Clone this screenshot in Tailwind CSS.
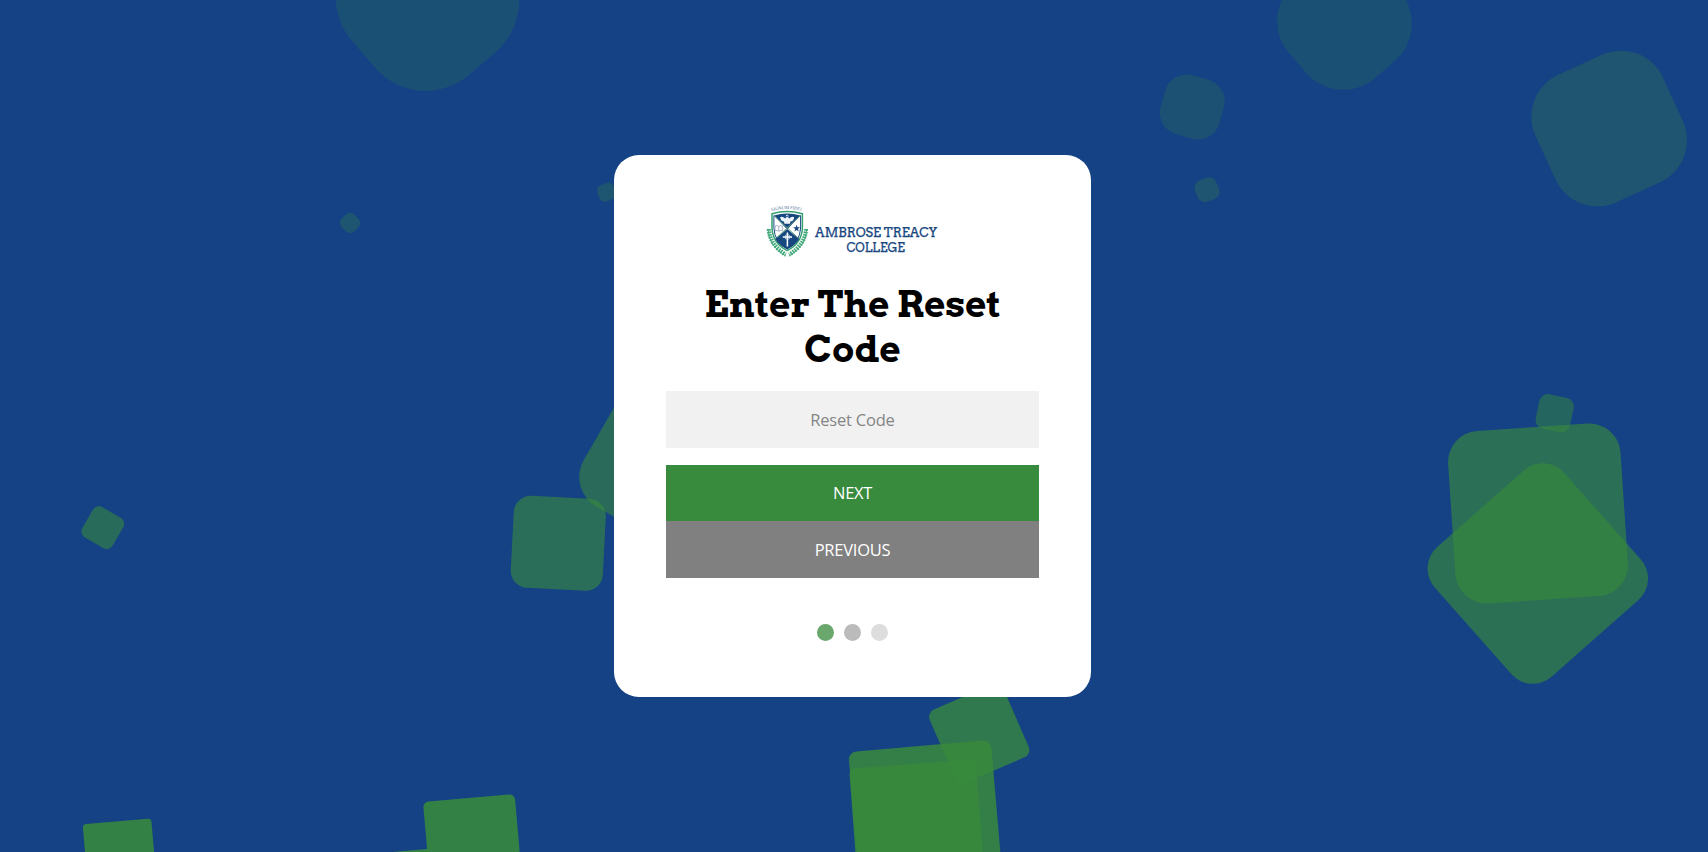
<!DOCTYPE html>
<html lang="en">
<head>
<meta charset="utf-8">
<title>Enter The Reset Code</title>
<script src="https://cdn.jsdelivr.net/npm/@tailwindcss/browser@4"></script>
</head>
<body class="relative flex h-screen items-start justify-center overflow-hidden bg-[#154284] pt-[154.7px] font-['Open_Sans','Noto_Sans',sans-serif]">
  <!-- Floating squares -->
  <svg class="absolute inset-0 h-full w-full" viewBox="0 0 1708 852" fill="#388a3c" aria-hidden="true">
    <rect x="-84.5" y="-84.5" width="169" height="169" rx="67" opacity=".2" transform="translate(427.5 -.9) rotate(49)"/>
    <rect x="-62" y="-62" width="124" height="124" rx="49" opacity=".2" transform="translate(1344.5 22.4) rotate(49)"/>
    <rect x="-30.5" y="-30.5" width="61" height="61" rx="22" opacity=".22" transform="translate(1192.3 107) rotate(16)"/>
    <rect x="-11.4" y="-11.4" width="22.8" height="22.8" rx="7.8" opacity=".28" transform="translate(1207 189.7) rotate(-22)"/>
    <rect x="-70" y="-70" width="140" height="140" rx="46" opacity=".28" transform="translate(1609.2 128.5) rotate(-24.5)"/>
    <rect x="-8.9" y="-8.9" width="17.8" height="17.8" rx="6.2" opacity=".27" transform="translate(350 223) rotate(45)"/>
    <rect x="-8.75" y="-8.75" width="17.5" height="17.5" rx="6" opacity=".27" transform="translate(606.5 192.3) rotate(-20)"/>
    <rect x="-17.5" y="-17.5" width="35" height="35" rx="8.7" opacity=".49" transform="translate(1554.7 413.2) rotate(12)"/>
    <rect x="-86.4" y="-86.4" width="172.8" height="172.8" rx="31" opacity=".62" transform="translate(1538 513.5) rotate(-3.8)"/>
    <rect x="-86.5" y="-86.5" width="173" height="173" rx="28.7" opacity=".64" transform="translate(1537.8 573.5) rotate(48.5)"/>
    <rect x="-75" y="-75" width="150" height="150" rx="34" opacity=".57" transform="translate(669.2 462) rotate(30)"/>
    <rect x="-46.1" y="-46.1" width="92.2" height="92.2" rx="17" opacity=".61" transform="translate(558.3 543.3) rotate(2.9)"/>
    <rect x="-17.5" y="-17.5" width="35" height="35" rx="7" opacity=".58" transform="translate(102.8 527.7) rotate(30)"/>
    <rect x="-34.4" y="-34.4" width="68.8" height="68.8" rx="3.5" opacity=".88" transform="translate(119.9 855.7) rotate(-5)"/>
    <rect x="-46" y="-46" width="92" height="92" rx="5.5" opacity=".88" transform="translate(472.8 843.8) rotate(-5)"/>
    <rect x="-30" y="-30" width="60" height="60" rx="2" opacity=".88" transform="translate(401.6 881.3) rotate(-5)"/>
    <rect x="-40" y="-40" width="80" height="80" rx="8" opacity=".76" transform="translate(979.2 733.4) rotate(-23.5)"/>
    <rect x="-71.5" y="-71.5" width="143" height="143" rx="8" opacity=".85" transform="translate(925.6 817.2) rotate(-4.9)"/>
    <rect x="-63.5" y="-63.5" width="127" height="127" rx="6" opacity=".88" transform="translate(917.2 827.3) rotate(-4.3)"/>
  </svg>

  <main class="relative -left-[1.5px] flex h-[542px] w-[476.4px] shrink-0 flex-col items-center rounded-[25px] bg-white px-[51.8px] pt-[48.3px]">
    <svg class="block h-[58px] w-[200px] shrink-0 overflow-visible" viewBox="752.4 203 200 58" role="img" aria-label="Ambrose Treacy College">
      <path id="motto" d="M772 211.4Q787.5 206.6 803 211.4" fill="none"/>
      <text font-family="'Liberation Serif',serif" font-size="4.6" fill="#5d7396"><textPath href="#motto" textLength="30">SIGNUM FIDEI</textPath></text>
      <path d="M772.4 213.8Q787.5 209 802.8 213.8V228Q802 243.5 787.6 250.6Q773.2 243.5 772.4 228Z" fill="#fff" stroke="#36a071" stroke-width="1.5"/>
      <path d="M774.4 215.6Q787.5 211.6 800.8 215.6L787.6 229.4Z" fill="#16487f"/>
      <path d="M787.6 229L775.6 239Q779.5 245.7 787.6 249.2Q795.7 245.7 799.6 239Z" fill="#16487f"/>
      <path d="M774.3 215.5L799.6 239M801 215.5L775.6 239" stroke="#5c977f" stroke-width="1"/>
      <path d="M774.3 215.5V228Q775 242.5 787.6 249Q800.2 242.5 801 228V215.5" fill="none" stroke="#16487f" stroke-width="1"/>
      <path d="M780.5 217.3Q783 216 785.5 218.4L787.6 216.6L789.7 218.4Q792.2 216 794.7 217.3Q794 221.5 790.8 221.6L790.4 223.8H784.8L784.4 221.6Q781.2 221.5 780.5 217.3Z" fill="#edf4fa"/>
      <path d="M786.2 216.2Q787.6 213.8 789 216.2" fill="none" stroke="#edf4fa" stroke-width="1"/>
      <path d="M775.5 226Q777.5 225 779.2 226.4Q781 225 782.8 226V230.7Q781 230 779.2 231.2Q777.5 230 775.5 230.7ZM779.2 226.4V231" fill="#fff" stroke="#8396b2" stroke-width=".7"/>
      <path d="M797 224.7L797.9 227.3H800.4L798.4 229L799.2 231.5L797 230L794.8 231.5L795.6 229L793.6 227.3H796.1Z" fill="#16487f"/>
      <path d="M787.8 232.5V246.4M783.2 237H792.4" stroke="#fff" stroke-width="1.5"/>
      <circle cx="787.8" cy="237" r="2.4" fill="none" stroke="#dce8f2" stroke-width=".8"/>
      <g fill="none" stroke="#43aa7c">
        <path d="M768.4 229.5Q769 246 786.4 256.2M807.2 229.5Q806.6 246 789.2 256.2" stroke-width="1"/>
        <path d="M769.2 229Q770 244.5 786 254.6M806.4 229Q805.6 244.5 789.6 254.6" stroke-width="4.2" stroke-dasharray="1.7 .9"/>
      </g>
      <g font-family="Arvo,'DejaVu Serif',serif" font-size="13.2" fill="#18487f" stroke="#18487f" stroke-width=".25">
        <text x="815.5" y="237.4" textLength="122" lengthAdjust="spacingAndGlyphs">AMBROSE TREACY</text>
        <text x="846.8" y="251.7" textLength="58.5" lengthAdjust="spacingAndGlyphs">COLLEGE</text>
      </g>
    </svg>

    <h1 class="mt-[21px] w-full text-center font-['Arvo','DejaVu_Serif',serif] text-[36.7px] leading-[45px] font-bold text-black">Enter The Reset<br>Code</h1>

    <form class="mt-[19px] flex w-full flex-col text-[16.5px]" onsubmit="return false">
      <input class="block h-[56.7px] w-full bg-[#f1f1f1] text-center tracking-[-0.2px] text-[#757575] placeholder:text-[#858585] outline-none" type="text" placeholder="Reset Code">
      <button class="mt-[17.2px] h-[56.5px] w-full bg-[#388a3c] pt-[1px] tracking-[-0.35px] text-white" type="button">NEXT</button>
      <button class="h-[56.3px] w-full bg-[#808080] pt-[1px] tracking-[-0.25px] text-white" type="button">PREVIOUS</button>
    </form>

    <div class="mt-[45.9px] flex gap-[9.8px]">
      <span class="h-[17.5px] w-[17.2px] rounded-full bg-[#69a76c]"></span>
      <span class="h-[17.5px] w-[17.2px] rounded-full bg-[#bbbbbb]"></span>
      <span class="h-[17.5px] w-[17.2px] rounded-full bg-[#dddddd]"></span>
    </div>
  </main>
</body>
</html>
